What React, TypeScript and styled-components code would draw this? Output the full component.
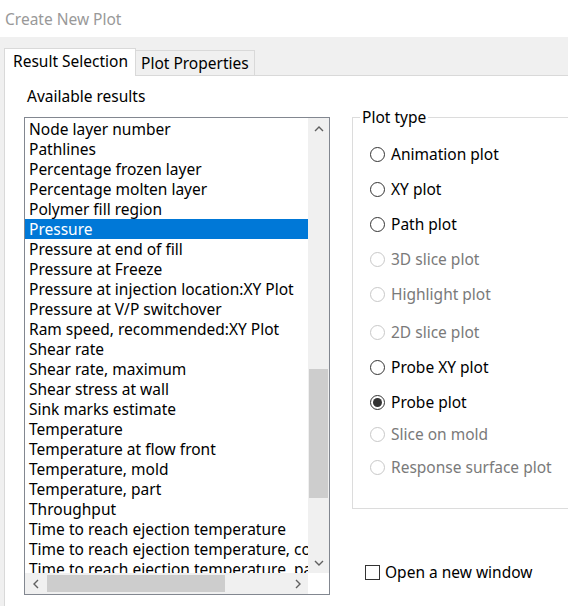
import React from "react";
import styled, { createGlobalStyle } from "styled-components";

const GlobalStyle = createGlobalStyle`
  html, body {
    margin: 0;
    padding: 0;
    overflow: hidden;
    background: #f0f0f0;
  }
  body {
    font-family: "Noto Sans", "Liberation Sans", sans-serif;
    font-size: 15.5px;
    color: #000;
  }
  * { box-sizing: border-box; }
`;

const Window = styled.div`
  width: 568px;
  height: 606px;
  display: flex;
  flex-direction: column;
  overflow: hidden;
  background: #f0f0f0;
`;

const TitleBar = styled.div`
  height: 37px;
  flex: none;
  background: #fff;
  color: #999;
  line-height: 20px;
  padding: 9px 0 0 5px;
`;

const DialogBody = styled.div`
  flex: 1;
  min-height: 0;
  display: flex;
  flex-direction: column;
  padding: 11px 0 0 4px;
`;

const TabStrip = styled.div`
  flex: none;
  height: 28px;
  display: flex;
  align-items: flex-end;
  position: relative;
  z-index: 1;
`;

const Tab = styled.div<{ $active?: boolean }>`
  height: ${(p) => (p.$active ? "28px" : "25px")};
  margin-bottom: ${(p) => (p.$active ? "0" : "1px")};
  padding: ${(p) => (p.$active ? "2px 7px 0 8px" : "2px 5px 0 5px")};
  line-height: 20px;
  background: ${(p) => (p.$active ? "#fff" : "#f0f0f0")};
  border: 1px solid #d9d9d9;
  border-bottom: none;
  border-left: ${(p) => (p.$active ? "1px solid #d9d9d9" : "none")};
  white-space: nowrap;
`;

const Panel = styled.div`
  flex: 1;
  min-height: 0;
  margin-top: -1px;
  display: flex;
  gap: 22px;
  padding-left: 19px;
  background: #fff;
  border-top: 1px solid #d9d9d9;
  border-left: 1px solid #d9d9d9;
`;

const LeftColumn = styled.div`
  flex: none;
  display: flex;
  flex-direction: column;
  padding-top: 10px;
`;

const SectionLabel = styled.div`
  line-height: 20px;
  padding-left: 3px;
  margin-bottom: 11px;
`;

const ListBox = styled.div`
  width: 306px;
  height: 478px;
  border: 1px solid #828790;
  display: grid;
  grid-template-columns: 1fr 21px;
  grid-template-rows: 1fr 21px;
  background: #fff;
`;

const ListViewport = styled.div`
  overflow: hidden;
  min-width: 0;
  min-height: 0;
  padding-top: 1px;
`;

const ListRow = styled.div<{ $selected?: boolean }>`
  height: 20px;
  line-height: 20px;
  padding-left: 4px;
  white-space: nowrap;
  background: ${(p) => (p.$selected ? "#0078d7" : "transparent")};
  color: ${(p) => (p.$selected ? "#fff" : "#000")};
`;

const VScroll = styled.div`
  background: #f0f0f0;
  display: flex;
  flex-direction: column;
`;

const HScroll = styled.div`
  background: #f0f0f0;
  display: flex;
`;

const ScrollCorner = styled.div`
  background: #fff;
`;

const ArrowButton = styled.div`
  flex: none;
  width: 21px;
  height: 21px;
  display: flex;
  align-items: center;
  justify-content: center;
`;

const VTrack = styled.div`
  flex: 1;
  display: flex;
  flex-direction: column;
`;

const HTrack = styled.div`
  flex: 1;
  display: flex;
`;

const VThumb = styled.div<{ $offset: number; $size: number }>`
  margin: ${(p) => p.$offset}px 1px 0 1px;
  height: ${(p) => p.$size}px;
  background: #cdcdcd;
`;

const HThumb = styled.div<{ $offset: number; $size: number }>`
  margin: 2px 0 2px ${(p) => p.$offset}px;
  width: ${(p) => p.$size}px;
  background: #cdcdcd;
`;

const RightColumn = styled.div`
  flex: none;
  display: flex;
  flex-direction: column;
  padding-top: 31px;
`;

const GroupBox = styled.fieldset`
  width: 240px;
  margin: 0;
  padding: 0 0 31px 17px;
  border: 1px solid #dcdcdc;
  border-right: none;
  display: flex;
  flex-direction: column;
`;

const Legend = styled.legend`
  margin-left: -10px;
  padding: 0 2px;
  line-height: 20px;
`;

const RadioRow = styled.label<{ $space: number; $disabled?: boolean }>`
  display: flex;
  align-items: center;
  gap: 6px;
  height: 20px;
  margin-top: ${(p) => p.$space}px;
  line-height: 20px;
  white-space: nowrap;
  color: ${(p) => (p.$disabled ? "#7a7a7a" : "#000")};
`;

const RadioCircle = styled.span<{ $checked?: boolean; $disabled?: boolean }>`
  flex: none;
  width: 15px;
  height: 15px;
  border-radius: 50%;
  border: 1px solid ${(p) => (p.$disabled ? "#c8c8c8" : "#333")};
  background: #fff;
  display: flex;
  align-items: center;
  justify-content: center;

  &::after {
    content: "";
    display: ${(p) => (p.$checked ? "block" : "none")};
    width: 9px;
    height: 9px;
    border-radius: 50%;
    background: #333;
  }
`;

const CheckRow = styled.label`
  display: flex;
  align-items: center;
  gap: 5px;
  height: 20px;
  margin: 53px 0 0 13px;
  line-height: 20px;
  white-space: nowrap;
`;

const CheckBox = styled.span`
  flex: none;
  width: 15px;
  height: 15px;
  border: 1px solid #333;
  background: #fff;
`;

type Dir = "up" | "down" | "left" | "right";

const Chevron: React.FC<{ dir: Dir }> = ({ dir }) => {
  const rot = { up: 0, right: 90, down: 180, left: 270 }[dir];
  return (
    <svg width="10" height="10" viewBox="0 0 10 10" style={{ transform: `rotate(${rot}deg)` }}>
      <path d="M1 7 L5 3 L9 7" fill="none" stroke="#606060" strokeWidth="1.4" />
    </svg>
  );
};

const results = [
  "Node layer number",
  "Pathlines",
  "Percentage frozen layer",
  "Percentage molten layer",
  "Polymer fill region",
  "Pressure",
  "Pressure at end of fill",
  "Pressure at Freeze",
  "Pressure at injection location:XY Plot",
  "Pressure at V/P switchover",
  "Ram speed, recommended:XY Plot",
  "Shear rate",
  "Shear rate, maximum",
  "Shear stress at wall",
  "Sink marks estimate",
  "Temperature",
  "Temperature at flow front",
  "Temperature, mold",
  "Temperature, part",
  "Throughput",
  "Time to reach ejection temperature",
  "Time to reach ejection temperature, core",
  "Time to reach ejection temperature, part",
];

const plotTypes: { label: string; space: number; disabled?: boolean; checked?: boolean }[] = [
  { label: "Animation plot", space: 17 },
  { label: "XY plot", space: 15 },
  { label: "Path plot", space: 15 },
  { label: "3D slice plot", space: 15, disabled: true },
  { label: "Highlight plot", space: 15, disabled: true },
  { label: "2D slice plot", space: 18, disabled: true },
  { label: "Probe XY plot", space: 15 },
  { label: "Probe plot", space: 15, checked: true },
  { label: "Slice on mold", space: 12, disabled: true },
  { label: "Response surface plot", space: 13, disabled: true },
];

export default function App() {
  const selected = 5;
  return (
    <>
      <GlobalStyle />
      <Window>
        <TitleBar>Create New Plot</TitleBar>
        <DialogBody>
          <TabStrip>
            <Tab $active>Result Selection</Tab>
            <Tab>Plot Properties</Tab>
          </TabStrip>
          <Panel>
            <LeftColumn>
              <SectionLabel>Available results</SectionLabel>
              <ListBox>
                <ListViewport>
                  {results.map((r, i) => (
                    <ListRow key={r} $selected={i === selected}>
                      {r}
                    </ListRow>
                  ))}
                </ListViewport>
                <VScroll>
                  <ArrowButton>
                    <Chevron dir="up" />
                  </ArrowButton>
                  <VTrack>
                    <VThumb $offset={230} $size={129} />
                  </VTrack>
                  <ArrowButton>
                    <Chevron dir="down" />
                  </ArrowButton>
                </VScroll>
                <HScroll>
                  <ArrowButton>
                    <Chevron dir="left" />
                  </ArrowButton>
                  <HTrack>
                    <HThumb $offset={1} $size={178} />
                  </HTrack>
                  <ArrowButton>
                    <Chevron dir="right" />
                  </ArrowButton>
                </HScroll>
                <ScrollCorner />
              </ListBox>
            </LeftColumn>
            <RightColumn>
              <GroupBox>
                <Legend>Plot type</Legend>
                {plotTypes.map((t) => (
                  <RadioRow key={t.label} $space={t.space} $disabled={t.disabled}>
                    <RadioCircle $checked={t.checked} $disabled={t.disabled} />
                    {t.label}
                  </RadioRow>
                ))}
              </GroupBox>
              <CheckRow>
                <CheckBox />
                Open a new window
              </CheckRow>
            </RightColumn>
          </Panel>
        </DialogBody>
      </Window>
    </>
  );
}
